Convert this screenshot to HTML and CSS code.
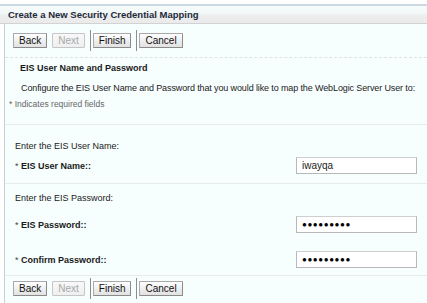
FILE: index.html
```html
<!DOCTYPE html>
<html>
<head>
<meta charset="utf-8">
<link rel="stylesheet" href="styles.css">
</head>
<body>
<div class="page">
  <div class="header">Create a New Security Credential Mapping</div>
  <div class="panel">
    <div class="toolbar">
      <button class="btn">Back</button>
      <button class="btn disabled">Next</button>
      <span class="sep"></span>
      <button class="btn">Finish</button>
      <span class="sep"></span>
      <button class="btn">Cancel</button>
    </div>
    <div class="section intro">
      <div class="title">EIS User Name and Password</div>
      <div class="desc">Configure the EIS User Name and Password that you would like to map the WebLogic Server User to:</div>
      <div class="req">* Indicates required fields</div>
    </div>
    <div class="section user">
      <div class="hint">Enter the EIS User Name:</div>
      <div class="row">
        <span class="label"><span class="star">*</span> EIS User Name::</span>
        <span class="input">iwayqa</span>
      </div>
    </div>
    <div class="section pass">
      <div class="hint">Enter the EIS Password:</div>
      <div class="row first">
        <span class="label"><span class="star">*</span> EIS Password::</span>
        <span class="input dots">●●●●●●●●●</span>
      </div>
      <div class="row second">
        <span class="label"><span class="star">*</span> Confirm Password::</span>
        <span class="input dots">●●●●●●●●●</span>
      </div>
    </div>
    <div class="toolbar bottom">
      <button class="btn">Back</button>
      <button class="btn disabled">Next</button>
      <span class="sep"></span>
      <button class="btn">Finish</button>
      <span class="sep"></span>
      <button class="btn">Cancel</button>
    </div>
  </div>
</div>
</body>
</html>
```

FILE: styles.css
```css
html, body {
  margin: 0;
  padding: 0;
  background: #ffffff;
}
body {
  font-family: "Liberation Sans", Arial, sans-serif;
  font-size: 9px;
  color: #222;
  width: 427px;
  height: 303px;
  overflow: hidden;
}
.page {
  padding-top: 4px;
}
.header {
  border-top: 2px solid #cdd8e0;
  border-bottom: 1px solid #d2d2d2;
  background: linear-gradient(#f6fcfc 0%, #f2f8f8 40%, #ececec 60%, #ebebeb 100%);
  height: 17px;
  line-height: 18px;
  padding-left: 8px;
  font-weight: bold;
  color: #1e2a3a;
  font-size: 9.5px;
}
.panel {
  margin-left: 4px;
  border-left: 1px solid #c7ced4;
  background: #f7fefe;
  height: 290px;
}
.toolbar {
  display: flex;
  align-items: center;
  height: 33px;
  padding-left: 8px;
}
.toolbar.bottom {
  border-top: 1px solid #e7ebeb;
  height: 24px;
  padding-top: 0;
}
.btn {
  font-family: "Liberation Sans", Arial, sans-serif;
  font-size: 10px;
  color: #111;
  height: 15px;
  padding: 0 5px;
  margin: 0 5px 0 0;
  border: 1px solid #a9a9a9;
  border-right-color: #8a8a8a;
  border-bottom-color: #8a8a8a;
  background: linear-gradient(#ffffff, #ececec 60%, #e2e2e2);
  border-radius: 1px;
  line-height: 13px;
}
.btn.disabled {
  color: #a8a8a8;
  border-color: #c6c6c6;
  background: linear-gradient(#f8f8f8, #efefef);
}
.sep {
  width: 1px;
  height: 21px;
  background: #8c8c8c;
  margin-right: 2px;
}
.intro {
  border-top: 1px dashed #dde3e3;
  height: 62px;
  padding-top: 4px;
  box-sizing: content-box;
}
.title {
  font-weight: bold;
  margin-left: 15px;
  line-height: 12px;
  height: 12px;
  color: #1a1a1a;
}
.desc {
  margin-left: 16px;
  margin-top: 8px;
  line-height: 12px;
  height: 12px;
  white-space: nowrap;
  letter-spacing: -0.12px;
}
.req {
  color: #666;
  font-size: 8.5px;
  margin-top: 4px;
  margin-left: 4px;
  line-height: 12px;
}
.user, .pass {
  border-top: 1px solid #e7ebeb;
  padding-left: 10px;
}
.user {
  height: 58px;
}
.pass {
  height: 91px;
}
.hint {
  line-height: 12px;
  height: 12px;
  margin-top: 15px;
}
.pass .hint {
  margin-top: 8px;
}
.row {
  display: flex;
  align-items: center;
  justify-content: space-between;
  height: 17px;
  margin-top: 5px;
  margin-right: 10px;
}
.row.first {
  margin-top: 12px;
}
.row.second {
  margin-top: 18px;
}
.label {
  font-weight: bold;
  color: #1a1a1a;
}
.star {
  font-weight: normal;
  color: #444;
}
.input {
  box-sizing: border-box;
  width: 121px;
  height: 17px;
  border: 1px solid #b8b8b8;
  border-top-color: #cfcfcf;
  background: #fff;
  padding-left: 5px;
  line-height: 15px;
  font-size: 10px;
  color: #222;
}
.dots {
  font-size: 8px;
  letter-spacing: 0.6px;
  color: #000;
}
```
